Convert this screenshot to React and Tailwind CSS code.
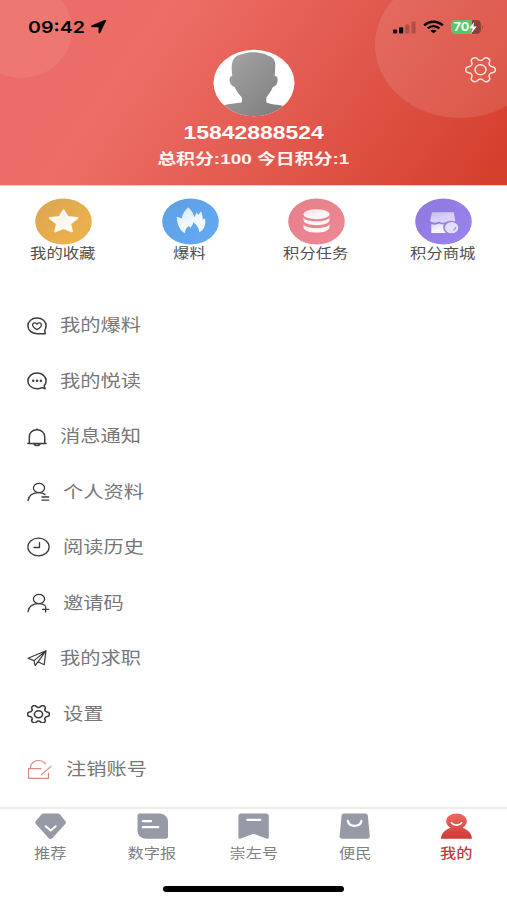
import React from "react";
import clsx from "clsx";

const GEAR =
  "M9.671 4.136a2.34 2.34 0 0 1 4.659 0 2.34 2.34 0 0 0 3.319 1.915 2.34 2.34 0 0 1 2.33 4.033 2.34 2.34 0 0 0 0 3.831 2.34 2.34 0 0 1-2.33 4.033 2.34 2.34 0 0 0-3.319 1.915 2.34 2.34 0 0 1-4.659 0 2.34 2.34 0 0 0-3.32-1.915 2.34 2.34 0 0 1-2.33-4.033 2.34 2.34 0 0 0 0-3.831A2.34 2.34 0 0 1 6.35 6.051a2.34 2.34 0 0 0 3.319-1.915";

function Gear({ className, stroke = 1.4 }) {
  return (
    <svg viewBox="1.6 2.4 20.8 19.2" preserveAspectRatio="none" fill="none" stroke="currentColor" strokeWidth={stroke} className={className}>
      <g transform="rotate(90 12 12)">
        <path d={GEAR} vectorEffect="non-scaling-stroke" />
        <circle cx="12" cy="12" r="3.7" vectorEffect="non-scaling-stroke" />
      </g>
    </svg>
  );
}

function LineIcon({ w, children, className }) {
  return (
    <svg
      width={w}
      height="20"
      viewBox={`0 0 ${w} 20`}
      fill="none"
      stroke="currentColor"
      strokeWidth="1.3"
      strokeLinecap="round"
      strokeLinejoin="round"
      className={clsx("shrink-0", className)}
    >
      {children}
    </svg>
  );
}

const person = (
  <>
    <ellipse cx="12" cy="6" rx="5.6" ry="4.6" />
    <path d="M1 18.6C1.5 14.2 5 10.7 12 10.6c2.600 0 4.700.8 6 2" />
  </>
);

const menu = [
  {
    label: "我的爆料",
    icon: (
      <LineIcon w={20}>
        <path d="M18.300 17.700H10C4.800 17.700.9 14.300.9 9.800S4.800 2 10 2s9.100 3.400 9.100 7.800c0 1.800-.6 3.300-1.400 4.700z" strokeWidth="1.500" />
        <path d="M10 13.600C7.200 12 5.600 10.600 5.600 8.900c0-2.300 3.200-2.800 4.400-.8 1.200-2 4.400-1.500 4.400.8 0 1.700-1.600 3.100-4.400 4.700z" />
      </LineIcon>
    ),
  },
  {
    label: "我的悦读",
    icon: (
      <LineIcon w={20}>
        <path d="M15.200 16.600c-1.500.8-3.300 1.200-5.200 1.200-5.200 0-9.100-3.400-9.100-7.900s3.900-7.800 9.100-7.800 9.100 3.400 9.100 7.800c0 1.900-.7 3.500-1.900 4.900l.8 3z" strokeWidth="1.500" />
        <path d="M6.200 9.800h.1M10 9.800h.1M13.800 9.800h.1" strokeWidth="2.400" />
      </LineIcon>
    ),
  },
  {
    label: "消息通知",
    icon: (
      <LineIcon w={20}>
        <path d="M.9 16.400h18.200M2.300 16V9.700c0-3.900 3.300-6.900 7.700-6.900s7.700 3 7.700 6.900V16M10 2.600V1.900M7.200 17.300c.9 1.600 4.700 1.600 5.600 0" strokeWidth="1.500" />
      </LineIcon>
    ),
  },
  {
    label: "个人资料",
    icon: (
      <LineIcon w={23}>
        {person}
        <path d="M15 15h6.700M15 18.200h6.700" />
      </LineIcon>
    ),
  },
  {
    label: "阅读历史",
    icon: (
      <LineIcon w={23}>
        <ellipse cx="11.500" cy="10" rx="10.600" ry="8.900" />
        <path d="M12.500 5.600v4.900H7" />
      </LineIcon>
    ),
  },
  {
    label: "邀请码",
    icon: (
      <LineIcon w={23}>
        {person}
        <path d="M15.500 16.300h6.300M18.600 13.600V19" />
      </LineIcon>
    ),
  },
  {
    label: "我的求职",
    icon: (
      <LineIcon w={20}>
        <path d="M19 2.700 1 10.300 7 12.600 19 2.700l-1.800 14-6.200-2.900M7 12.600l1 4.900 3-3.700M19 2.700l-8 11.100" strokeWidth="1.200" />
      </LineIcon>
    ),
  },
  { label: "设置", icon: <Gear className="h-[18.500px] w-[23px]" stroke={1.600} /> },
  {
    label: "注销账号",
    icon: (
      <LineIcon w={26} className="text-[#d98c80]">
        <path d="M14 9.600H1.500v9.800h20V14M3.300 9.300C3.300 4.600 6.800 1.500 11.500 1.500c3.200 0 5.700 1.200 7 3.400M14.300 15.800 24 7.400" strokeWidth="1.200" />
      </LineIcon>
    ),
  },
];

const shortcuts = [
  {
    label: "我的收藏",
    from: "#dca551",
    to: "#efb448",
    icon: (
      <path
        d="m28.600 12.500 4.200 6.600 9.500 1-7.200 5.500 1.800 7.700-8.300-3.300-8.300 3.300 1.800-7.700-7.200-5.500 9.500-1z"
        fill="url(#glyph)"
        stroke="#fff"
        strokeOpacity=".85"
        strokeWidth="2.200"
        strokeLinejoin="round"
      />
    ),
  },
  {
    label: "爆料",
    from: "#5c9fe4",
    to: "#65aaf5",
    icon: (
      <path
        d="M23 35.300c-5.300-3.300-8-8.500-8.300-16.600 2 .3 3.600.8 5 1.800.8-4.500 3.100-8 6.600-11.200 3 2.800 5 6 6 10 .9-1.800 1.800-3.300 2.400-4.800l1.600 2.600c1-1.200 1.800-2.400 2.700-3.800 1.400 3.300 1.700 5.500 1.700 8.200l2.300-1c1.300 6-.8 11.300-5.700 13.700-.3-4-2.300-7.300-6-9.900-.4 2.200-1.300 4-2.900 5.500l-1.500-1.700c-2.700 1.900-3.900 4-3.900 7.200z"
        fill="url(#glyph)"
      />
    ),
  },
  {
    label: "积分任务",
    from: "#e58088",
    to: "#ef8795",
    icon: (
      <g fill="url(#glyph)">
        <ellipse cx="28.500" cy="16.300" rx="13" ry="5" />
        <path d="M15.500 19.400c3 5.200 23 5.200 26 0v2.800c0 6.400-26 6.400-26 0z" />
        <path d="M15.500 26.200c3 5.200 23 5.200 26 0v3c0 7.200-26 7.200-26 0z" />
      </g>
    ),
  },
  {
    label: "积分商城",
    from: "#8d78df",
    to: "#9b84ee",
    icon: (
      <>
        <path d="M17 14.300h21.800l1.500 8.500c-2 2.600-5.600 2.500-8 .6-2.400 1.900-6 1.900-8.300 0-2.600 1.900-6.800 1.700-8.900-.6z" fill="url(#glyph)" opacity=".7" />
        <path d="M16.300 26.300c3 .8 5.600.5 7.900-.7 2.700 1.300 5.500 1.300 8 0l7 .5v9H16.300z" fill="url(#glyph)" />
        <ellipse cx="36.300" cy="29.700" rx="8.200" ry="6.900" fill="#9580e6" />
        <ellipse cx="36.600" cy="29.700" rx="6.700" ry="5.600" fill="#e3defb" />
        <path d="M38.300 32.200c1.500-.5 2.300-1.500 2.400-2.900" stroke="#9580e6" strokeWidth="1.200" fill="none" />
      </>
    ),
  },
];

const tabs = [
  {
    label: "推荐",
    icon: (
      <>
        <path d="M9 .5h13.500c1.300 0 2 .4 2.800 1.300l5 6.300c.8 1 .8 2 0 3L17.500 25c-1.300 1.200-2.700 1.200-4 0L.9 11.100c-.9-1-.9-2 0-3l5.200-6.300C6.900.9 7.700.5 9 .5z" />
        <path d="m10.700 13.200 5 4.400 5-4.400" stroke="#fff" strokeWidth="2" strokeLinecap="round" strokeLinejoin="round" fill="none" />
      </>
    ),
  },
  {
    label: "数字报",
    icon: (
      <>
        <path d="M2.500.5H22c5 0 9 3.500 9 8v15c0 1.300-.8 2.200-2.400 2.200H9.500c-5 0-9-3.200-9-7.700V2.500C.5 1.200 1.300.5 2.500.5z" />
        <path d="M6 8.200h8M6 14.200h15.200" stroke="#fff" strokeWidth="2.300" strokeLinecap="round" />
      </>
    ),
  },
  {
    label: "崇左号",
    icon: (
      <>
        <path d="M3 .5h25c1.800 0 2.800.9 2.800 2.400v21.500c0 1.200-1.200 1.700-2.500 1.200L17 21.200c-1-.4-2-.4-3 0L2.900 25.600c-1.300.5-2.500 0-2.500-1.200V2.900C.4 1.400 1.300.5 3 .5z" />
        <path d="M9.200 6.800h13" stroke="#fff" strokeWidth="2.300" strokeLinecap="round" />
      </>
    ),
  },
  {
    label: "便民",
    icon: (
      <>
        <path d="M5 .5h21.300c1.400 0 2.300.8 2.500 2l2 20.400c.1 1.700-.8 2.800-2.600 2.800H3.200c-1.800 0-2.800-1.100-2.600-2.800l2-20.400c.2-1.200 1-2 2.400-2z" />
        <path d="M8.800 7.800c1.300 6.800 12.400 6.800 13.700 0" stroke="#fff" strokeWidth="2.200" strokeLinecap="round" fill="none" />
      </>
    ),
  },
  {
    label: "我的",
    active: true,
    icon: (
      <>
        <path d="M15.500.5c5.700 0 10.300 3.200 10.300 7.700 0 2.800-1.700 5.300-4.400 6.500 5.300 1.700 9.200 5.300 9.600 11H0c.4-5.700 4.300-9.300 9.600-11-2.700-1.200-4.400-3.700-4.400-6.500C5.200 3.700 9.800.5 15.500.5z" fill="url(#mine)" />
        <path d="M10.400 9.800c2.300 3 8 3 10.300 0" stroke="#fff" strokeWidth="1.700" strokeLinecap="round" fill="none" />
      </>
    ),
  },
];

function StatusBar() {
  return (
    <div className="flex h-[54px] items-center justify-between pl-[28px] pr-[24px] text-black">
      <div className="flex items-center gap-[6px]">
        <span className="w-[57px] whitespace-nowrap font-['Inter'] text-[16.500px] leading-none font-semibold">
          <span className="inline-block origin-left scale-x-[1.190]">09:42</span>
        </span>
        <svg width="16" height="14" viewBox="0 0 16 14">
          <path d="M14.900.5 9.200 12.700c-.4.8-1.400.6-1.400-.2V6.900H1C0 6.900-.2 6.100.7 5.700L14 .1c.7-.3 1.200-.1.900.4z" stroke="#000" strokeWidth=".5" />
        </svg>
      </div>
      <div className="flex items-center gap-[7px]">
        <svg width="23" height="13" viewBox="0 0 23 13">
          <rect x="0" y="8.500" width="4.200" height="4" rx="1" />
          <rect x="6" y="6.300" width="4.200" height="6.200" rx="1" />
          <rect x="12.200" y="3.500" width="4.200" height="9" rx="1" opacity=".22" />
          <rect x="18.400" y="0.500" width="4.200" height="12" rx="1" opacity=".22" />
        </svg>
        <svg width="21" height="14" viewBox="0 0 21 14" fill="none" stroke="#000">
          <path d="M1.200 5.400c5.200-5 13.400-5 18.600 0" strokeWidth="2.500" />
          <path d="M4.700 8.400c3.400-3 8.200-3 11.600 0" strokeWidth="2.300" />
          <path d="M7.300 10.800c1.800-1.500 4.600-1.500 6.400 0L10.500 13.300z" fill="#000" stroke="none" />
        </svg>
        <div className="flex items-center gap-px">
          <div className="flex h-[14px] w-[30px] items-center justify-center rounded-[4.500px] bg-linear-to-r from-[#5cc568] from-70% to-[#8f403b] to-70% font-['Inter'] text-[12px] leading-none font-bold text-white">
            <span className="inline-block scale-x-[1.060]">70</span>
            <svg width="8" height="11" viewBox="0 0 8 11">
              <path d="M5.200 0 .3 6.200h3.200L2.600 11l5.100-6.400H4.400z" fill="#fff" />
            </svg>
          </div>
          <span className="h-1 w-[1.500px] rounded-r bg-[#8f403b]/70" />
        </div>
      </div>
    </div>
  );
}

function Avatar() {
  return (
    <svg width="82" height="68" viewBox="0 0 82 68">
      <defs>
        <linearGradient id="shade" x1="0" y1="0" x2="1" y2="1">
          <stop offset="0" stopColor="#a8a8a8" />
          <stop offset="1" stopColor="#7b7b7b" />
        </linearGradient>
        <clipPath id="round">
          <ellipse cx="41" cy="34" rx="40.500" ry="33.300" />
        </clipPath>
      </defs>
      <g clipPath="url(#round)">
        <rect width="82" height="68" fill="#fff" />
        <path
          d="M19.300 27c-.8-5.500-1-11 .4-15C21.500 7.800 25.500 5.500 30 5c4.500-2.300 13.500-2.300 19-.7 2.500.4 4.500 1.700 6 2.500 4.500 1 7 4 7.200 8 .3 4.200-.4 8.500-.4 12.200 2.400-.2 3.200 2 2.800 4.800-.4 3.700-2 5.800-4.800 6.200-1.300 3.700-3.800 6.800-6 9.700-.8 1.700-.6 3.700-.3 5.800 4.500 2 10.500 2 17 3.500V68H6V57c7-1.700 14.500-2.200 22.700-3.500.4-1.800.4-3.800-.2-5.500-2.800-2.800-5.500-6.200-6.800-10-2.800-.7-4.700-3-5.100-6.200-.3-2.800.4-4.800 2.700-4.800z"
          fill="url(#shade)"
        />
      </g>
    </svg>
  );
}

function Header() {
  return (
    <header className="relative h-[186px] overflow-hidden border-b border-[#fbc9bd] bg-[linear-gradient(125deg,#ec6c69_0%,#ec6e66_28%,#e1574c_62%,#d5402d_96%)]">
      <svg className="absolute inset-0" width="507" height="186">
        <ellipse cx="21" cy="30" rx="51" ry="48" fill="#f0a090" opacity=".22" />
        <ellipse cx="460" cy="45" rx="85" ry="73" fill="#fff" opacity=".11" />
      </svg>
      <div className="relative">
        <StatusBar />
        <div className="-mt-[5px] flex flex-col items-center">
          <Avatar />
          <p className="mt-[6px] scale-x-[1.240] font-['Liberation_Sans'] text-[18.500px] leading-[20px] font-bold text-white">15842888524</p>
          <p className="mt-[6px] scale-x-[1.260] font-['Liberation_Sans','Noto_Sans_CJK_SC'] text-[15px] leading-[20px] font-bold whitespace-nowrap text-[#fff3f0]">
            总积分:100 今日积分:1
          </p>
        </div>
        <button className="absolute top-[57px] right-[11.500px] text-[#fde3df]">
          <Gear className="h-[25.500px] w-[31px]" stroke={1.500} />
        </button>
      </div>
    </header>
  );
}

export default function App() {
  return (
    <div className="flex h-[900px] w-[507px] flex-col overflow-hidden bg-white font-['Inter','Noto_Sans_CJK_SC',sans-serif]">
      <svg width="0" height="0" className="absolute">
        <defs>
          <linearGradient id="glyph" x1="0" y1="0" x2="0.600" y2="1">
            <stop offset="0" stopColor="#fff" stopOpacity=".7" />
            <stop offset="0.600" stopColor="#fff" stopOpacity=".92" />
          </linearGradient>
          <linearGradient id="mine" x1="0" y1="0" x2="0" y2="1">
            <stop offset="0" stopColor="#ea6a62" />
            <stop offset="1" stopColor="#cf3a35" />
          </linearGradient>
        </defs>
      </svg>

      <Header />

      <section className="grid h-[112px] grid-cols-4 pt-[12px]">
        {shortcuts.map((item, i) => (
          <div key={item.label} className="flex flex-col items-center">
            <svg width="57" height="47" viewBox="0 0 57 47">
              <defs>
                <linearGradient id={`disc${i}`} x1="0" y1="0" x2="1" y2="1">
                  <stop offset="0" stopColor={item.from} />
                  <stop offset="1" stopColor={item.to} />
                </linearGradient>
              </defs>
              <ellipse cx="28.500" cy="23.500" rx="28.300" ry="23" fill={`url(#disc${i})`} />
              {item.icon}
            </svg>
            <span className="-mt-[2px] mr-[2px] scale-x-[1.220] text-[13.400px] leading-[20px] text-[#505050]">{item.label}</span>
          </div>
        ))}
      </section>

      <ul className="grid h-[499px] shrink-0 grid-rows-9">
        {menu.map((item) => (
          <li key={item.label} className="flex items-center gap-[13px] pl-[27px] text-[#3c3c3c]">
            {item.icon}
            <span className="origin-left scale-x-[1.220] text-[16.600px] leading-none text-[#777]">{item.label}</span>
          </li>
        ))}
      </ul>

      <nav className="mt-[10px] grid h-[60px] shrink-0 grid-cols-5 border-t-2 border-[#ececec] pt-[4px]">
        {tabs.map((tab) => (
          <div key={tab.label} className="flex flex-col items-center">
            <svg width="31" height="26" viewBox="0 0 31 26" fill="#969aa6">
              {tab.icon}
            </svg>
            <span
              className={clsx(
                "mt-[4px] scale-x-[1.220] text-[13.300px] leading-[20px]",
                tab.active ? "font-medium text-[#c53a42]" : "text-[#808080]"
              )}
            >
              {tab.label}
            </span>
          </div>
        ))}
      </nav>

      <div className="mx-auto mt-[19px] h-[6px] w-[181px] rounded-full bg-black" />
    </div>
  );
}
